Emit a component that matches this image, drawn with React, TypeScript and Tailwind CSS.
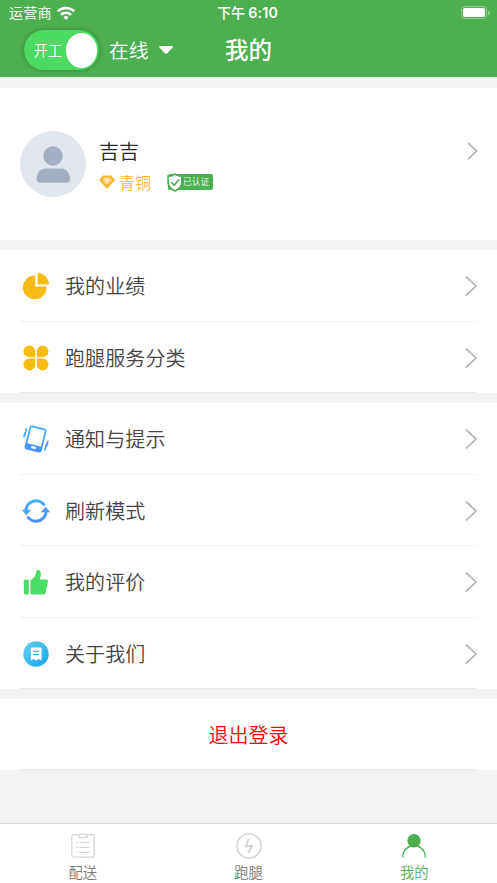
import type { ReactNode } from "react";

function Chevron({ small = false }: { small?: boolean }) {
  return small ? (
    <svg className="block h-[18px] w-[11px] shrink-0" viewBox="0 0 11 18" fill="none" stroke="#b3b3b3" strokeWidth="1.6">
      <path d="M1 0.8 9.6 9 1 17.2" />
    </svg>
  ) : (
    <svg className="block h-5 w-3 shrink-0" viewBox="0 0 12 20" fill="none" stroke="#b3b3b3" strokeWidth="1.7">
      <path d="M1 0.6 11 10 1 19.4" />
    </svg>
  );
}

function PieIcon() {
  return (
    <svg className="block size-[26px]" viewBox="0 0 26 26" fill="#f7bb14">
      <path d="M12.3 2.6V13.4h11.3A11.9 11.9 0 1 1 12.3 2.6Z" />
      <path d="M14.6 0A11.6 11.6 0 0 1 26 11.6H14.6Z" />
    </svg>
  );
}

function CloverIcon() {
  return (
    <svg className="block size-[26px]" viewBox="0 0 26 26" fill="#f7bb14">
      <path d="M6.2.4a6 6 0 0 1 6 6v5.8H6.4A5.9 5.9 0 0 1 6.2.4Z" />
      <path d="M19.6.4a6 6 0 0 0-5.9 6v5.8h5.9A5.9 5.9 0 0 0 19.6.4Z" />
      <path d="M6.2 25.4a6 6 0 0 0 6-6v-5.8H6.4a5.9 5.9 0 0 0-.2 11.8Z" />
      <path d="M19.6 25.4a6 6 0 0 1-5.9-6v-5.8h5.9a5.9 5.9 0 0 1 0 11.8Z" />
    </svg>
  );
}

function PhoneIcon() {
  return (
    <svg className="block h-[28px] w-[26px]" viewBox="0 0 26 28">
      <defs>
        <linearGradient id="phone" x1="0" y1="0" x2="0" y2="1">
          <stop offset="0" stopColor="#46b4ff" />
          <stop offset="1" stopColor="#4b93fc" />
        </linearGradient>
      </defs>
      <g transform="rotate(14 13 14)">
        <path
          fillRule="evenodd"
          fill="url(#phone)"
          d="M6.4 1.8h12.4A2.6 2.6 0 0 1 21.4 4.4v19.4a2.6 2.6 0 0 1-2.6 2.6H6.4a2.6 2.6 0 0 1-2.6-2.6V4.4a2.6 2.6 0 0 1 2.6-2.6ZM6.7 3.6a1.1 1.1 0 0 0-1.1 1.1v15.4h14V4.7a1.1 1.1 0 0 0-1.1-1.1ZM11.3 21.8a1.1 1.1 0 0 0 0 2.2h2.8a1.1 1.1 0 0 0 0-2.2Z"
        />
      </g>
      <g fill="none" strokeWidth="1.6" strokeLinecap="round">
        <path stroke="#48a9fe" d="M3.6 3.9 2 9.5M2 7.7 1 11.8" />
        <path stroke="#4b97fc" d="m23.5 19.3-1.6 5.6M24.9 16.3l-1.3 4.6" />
      </g>
    </svg>
  );
}

function RefreshIcon() {
  return (
    <svg className="block h-[26px] w-[28px]" viewBox="0 0 28 26">
      <defs>
        <linearGradient id="refresh" x1="0" y1="0" x2="0" y2="26" gradientUnits="userSpaceOnUse">
          <stop offset="0" stopColor="#43b5ff" />
          <stop offset="1" stopColor="#4b8cfb" />
        </linearGradient>
      </defs>
      <g fill="none" stroke="url(#refresh)" strokeWidth="3">
        <path d="M3.9 13a10.1 10.1 0 0 1 18.6-5.5" />
        <path d="M24.1 13a10.1 10.1 0 0 1-18.6 5.5" />
      </g>
      <path fill="#47a6fe" d="M-.2 11.8h9.4L4.3 17.3Z" />
      <path fill="#4a9efd" d="M28.2 14.2h-9.4l4.9-5.5Z" />
    </svg>
  );
}

function ThumbIcon() {
  return (
    <svg className="block size-[26px]" viewBox="0 0 26 26" fill="#4cdb67">
      <path d="M1.6 10.8h4.2v14.6H2.4A1.4 1.4 0 0 1 1 24L.7 11.8a1 1 0 0 1 .9-1Z" />
      <path d="M7.4 11.1c3-1 5.2-3.8 5.7-7.3.2-1.6.3-3.1 1.8-3.1 2 0 3 2.2 3 4.4 0 2-.6 3.8-1.2 5.3h6.8c1.2 0 1.8.9 1.5 2l-2.4 11.4c-.3 1.1-.8 1.6-2 1.6H8.7c-.8 0-1.3-.5-1.3-1.3Z" />
    </svg>
  );
}

function AboutIcon() {
  return (
    <svg className="block size-[26px]" viewBox="0 0 26 26">
      <defs>
        <linearGradient id="about" x1="0" y1="0" x2="1" y2="1">
          <stop offset="0" stopColor="#66cdf1" />
          <stop offset="1" stopColor="#12a7ea" />
        </linearGradient>
      </defs>
      <circle cx="13" cy="13" r="12.7" fill="url(#about)" />
      <path fill="#fff" d="M8.8 6.4h8.8a1 1 0 0 1 1 1v12L15.8 18 13.2 19.4 10.6 18l-2.8 1.4v-12a1 1 0 0 1 1-1Z" />
      <path stroke="#3bbaee" strokeWidth="1.2" d="M10.3 10.3h5.8M10.3 13.6h5.8" />
    </svg>
  );
}

function Row({ icon, label, last = false }: { icon: ReactNode; label: string; last?: boolean }) {
  return (
    <div
      className={`mx-5 flex h-[71.5px] items-center border-b pt-[1.5px] ${last ? "border-[#eaeaea]" : "border-[#f1f1f1]"}`}
    >
      <div className="flex w-8 shrink-0 items-center justify-center">{icon}</div>
      <div className="ml-[13px] grow text-[20px] leading-[30px] tracking-[0.1px] text-[#444]">{label}</div>
      <Chevron />
    </div>
  );
}

function Tab({ icon, label, active = false }: { icon: ReactNode; label: string; active?: boolean }) {
  return (
    <div className={`flex flex-1 flex-col items-center pt-2 ${active ? "text-[#4caf50]" : "text-[#777]"}`}>
      {icon}
      <span className="mt-[3px] text-[14.3px] leading-5">{label}</span>
    </div>
  );
}

export default function App() {
  return (
    <div className="flex h-[883px] w-[497px] flex-col overflow-hidden bg-[#f3f3f3] font-['Noto_Sans_CJK_SC_DemiLight','Noto_Sans_CJK_SC',sans-serif] font-[350]">
      <header className="h-[77px] shrink-0 bg-[#4caf50] text-white">
        <div className="grid h-[25px] grid-cols-3 items-center pr-[7px] pl-[9px]">
          <div className="flex items-center gap-[5px] text-[14.2px] leading-5">
            <span className="-mt-px">运营商</span>
            <svg className="block h-[14px] w-[18px]" viewBox="0 0 18 14" fill="none" stroke="#fff" strokeWidth="2.5">
              <path d="M.8 5.3a11.8 11.8 0 0 1 16.4 0" />
              <path d="M4 8.8a7.2 7.2 0 0 1 10 0" />
              <path fill="#fff" stroke="none" d="M6.4 11.3a3.7 3.7 0 0 1 5.2 0L9 13.9Z" />
            </svg>
          </div>
          <div className="-ml-1 flex items-center justify-center gap-[3px] text-[14.2px] leading-5 font-medium">
            <span className="-mt-px font-['Noto_Sans_CJK_SC',sans-serif]">下午</span>
            <span className="font-['Inter',sans-serif] text-[14.2px] font-semibold tracking-[0.2px]">6:10</span>
          </div>
          <div className="flex items-center justify-end gap-px">
            <div className="h-[13px] w-[26px] rounded-[4px] border border-[#94cf96] p-px">
              <div className="h-full rounded-[2px] bg-white" />
            </div>
            <div className="h-1 w-[2px] rounded-r-full bg-[#94cf96]" />
          </div>
        </div>
        <div className="grid h-[52px] grid-cols-[1fr_auto_1fr] items-start">
          <div className="flex items-center pt-[5px] pl-6">
            <div className="flex h-10 w-[75px] items-center justify-between rounded-full bg-[#4cd964] pr-[2px] pl-[9.5px] shadow-[0_0_5px_rgba(0,0,0,0.28)]">
              <span className="text-[14.3px] leading-5">开工</span>
              <span className="h-[35px] w-[31.5px] rounded-[50%] bg-white" />
            </div>
            <span className="ml-[10px] text-[19.8px] leading-8">在线</span>
            <svg className="ml-[10px] block h-2 w-[14px]" viewBox="0 0 14 8" fill="#fff">
              <path d="M1 0h12c.9 0 1.2.8.6 1.4L8 7.5c-.6.6-1.4.6-2 0L.4 1.4C-.2.8.1 0 1 0Z" />
            </svg>
          </div>
          <h1 className="pt-[6px] font-['Noto_Sans_CJK_SC',sans-serif] text-[23.5px] leading-9 font-medium">我的</h1>
          <div />
        </div>
      </header>

      <section className="mt-[11px] flex h-[152px] shrink-0 items-start bg-white pr-[19px] pl-[20px]">
        <svg className="mt-[42.5px] block size-[66px]" viewBox="0 0 66 66">
          <circle cx="33" cy="33" r="33" fill="#e1e6ed" />
          <circle cx="33" cy="25" r="9.7" fill="#a4aec1" />
          <path fill="#a4aec1" d="M25 37.5h16.5c5 0 8.5 5 8.5 11 0 2.2-1.2 3.3-3.3 3.3H19.9c-2.1 0-3.3-1.1-3.3-3.3 0-6 3.4-11 8.4-11Z" />
        </svg>
        <div className="mt-[47px] ml-[13px] grow">
          <div className="text-[20px] leading-8 text-[#2a2a2a]">吉吉</div>
          <div className="mt-1 flex h-[22px] items-center">
            <svg className="block h-[14px] w-4" viewBox="0 0 16 14">
              <path fill="#fcb32b" d="M4 .4h8.2L16 5.2 8.1 13.7.1 5.2Z" />
              <path fill="#ffda98" d="M5.3 2.6h5.6l2 2.8-4.8 5.2-4.8-5.2Z" />
              <path fill="#ffc562" d="M3.3 5.4h9.6l-4.8 5.2Z" />
              <path fill="#ffe5b8" d="M5.8 5.4h4.6l-2.3 4.2ZM8.1 2.6l2.3 2.8H5.8Z" />
            </svg>
            <span className="ml-1 text-[16px] leading-5 text-[#ffb52f]">青铜</span>
            <div className="ml-[17px] flex h-4 w-[45px] items-center rounded-[2px] bg-[#4caf50]">
              <svg className="-my-px -ml-px block h-[19px] w-4 shrink-0" viewBox="0 0 16 19">
                <path
                  fill="#fff"
                  stroke="#4caf50"
                  strokeWidth="1.7"
                  d="M8 1.1c2 1.5 4.3 2.1 6.9 2.1v6.1c0 4.1-2.8 6.8-6.9 8.7-4.1-1.9-6.9-4.6-6.9-8.7V3.2C3.7 3.2 6 2.6 8 1.1Z"
                />
                <path fill="none" stroke="#4caf50" strokeWidth="1.6" d="m4.2 9 3 3.2L12 6.5" />
              </svg>
              <span className="text-[8.8px] leading-3 whitespace-nowrap text-white">已认证</span>
            </div>
          </div>
        </div>
        <div className="mt-[54px]">
          <Chevron small />
        </div>
      </section>

      <section className="mt-[10px] shrink-0 bg-white">
        <Row icon={<PieIcon />} label="我的业绩" />
        <Row icon={<CloverIcon />} label="跑腿服务分类" last />
      </section>

      <section className="mt-[10px] shrink-0 bg-white">
        <Row icon={<PhoneIcon />} label="通知与提示" />
        <Row icon={<RefreshIcon />} label="刷新模式" />
        <Row icon={<ThumbIcon />} label="我的评价" />
        <Row icon={<AboutIcon />} label="关于我们" last />
      </section>

      <section className="mt-[10px] shrink-0 bg-white">
        <div className="mx-5 flex h-[71px] items-center justify-center border-b border-[#eaeaea] pt-[2px] text-[20px] leading-[30px] text-[#ff0000]">
          退出登录
        </div>
      </section>

      <nav className="mt-auto flex h-[60px] shrink-0 border-t border-[#d9d9d9] bg-white">
        <Tab
          label="配送"
          icon={
            <svg className="mt-px block h-[26px] w-6" viewBox="0 0 24 26" fill="none" stroke="#d5d5d5" strokeWidth="1.3">
              <path d="M7.2 1.6H2.6a1.8 1.8 0 0 0-1.8 1.8v19a1.8 1.8 0 0 0 1.8 1.8h18.8a1.8 1.8 0 0 0 1.8-1.8v-19a1.8 1.8 0 0 0-1.8-1.8h-4.6" />
              <path d="M8 1.2h8v3.4H8ZM8.5 9.3h10M8.5 14.3h10M8.5 19.3h10M5.2 9.3h2M5.2 14.3h2M5.2 19.3h2" />
            </svg>
          }
        />
        <Tab
          label="跑腿"
          icon={
            <svg className="mt-px block size-[26px]" viewBox="0 0 26 26" fill="none" stroke="#d0d0d0" strokeWidth="1.4">
              <circle cx="13" cy="13" r="12.1" />
              <path strokeLinejoin="round" strokeLinecap="round" strokeWidth="1.7" d="M12.4 6.5 9.8 13.6l6.2-.9-3.4 7" />
            </svg>
          }
        />
        <Tab
          active
          label="我的"
          icon={
            <svg className="mt-px block h-[26px] w-6" viewBox="0 0 24 26">
              <circle cx="12" cy="7.8" r="6.7" fill="#4caf50" />
              <path fill="none" stroke="#4caf50" strokeWidth="1.3" d="M.8 24.5v-1.2a11.2 10.8 0 0 1 22.4 0v1.2" />
            </svg>
          }
        />
      </nav>
    </div>
  );
}
